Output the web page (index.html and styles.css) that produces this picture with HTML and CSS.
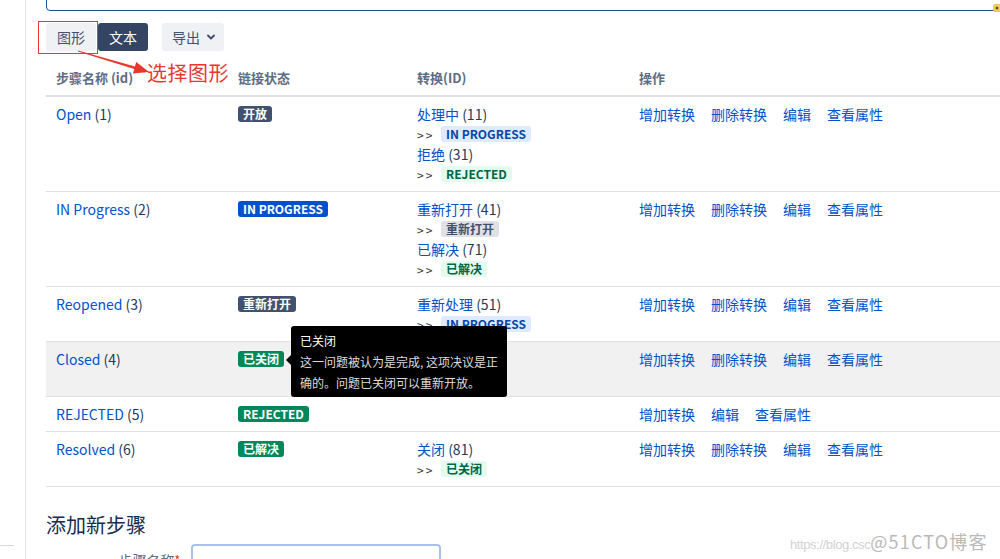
FILE: index.html
```html
<!DOCTYPE html>
<html lang="zh-CN">
<head>
    <meta charset="UTF-8">
    <meta name="viewport" content="width=device-width, initial-scale=1.0">
    <title>工作流 - 步骤</title>
    <link rel="stylesheet" href="styles.css">
</head>
<body>
<div class="page">
    <aside class="sidebar">
        <div class="side-foot"></div>
    </aside>

    <main class="main">
        <div class="editor"><span class="grammar-dot"></span></div>

        <div class="toolbar">
            <div class="btn-group">
                <button class="btn">图形</button>
                <button class="btn btn-selected">文本</button>
            </div>
            <button class="btn btn-drop">导出
                <svg width="12" height="12" viewBox="0 0 12 12"><path d="M3 4.5 L6 7.5 L9 4.5" fill="none" stroke="#42526e" stroke-width="2" stroke-linecap="round" stroke-linejoin="round"/></svg>
            </button>

            <!-- 截图标注 -->
            <div class="mark-box"></div>
            <svg class="mark-arrow" width="200" height="100" viewBox="0 0 200 100">
                <polygon points="78.1,49.6 134.9,65.6 136.3,61 149,71 132.9,72.5 134.3,67.9 77.9,50.4" fill="#e8372f"/>
            </svg>
            <span class="mark-label">选择图形</span>
        </div>

        <div class="steps">
            <div class="row head">
                <div class="cell">步骤名称 (id)</div>
                <div class="cell">链接状态</div>
                <div class="cell">转换(ID)</div>
                <div class="cell">操作</div>
            </div>

            <div class="row">
                <div class="cell"><a href="#">Open</a> <span class="count">(1)</span></div>
                <div class="cell"><span class="loz loz-dark">开放</span></div>
                <div class="cell">
                    <div class="line"><a href="#">处理中</a> <span class="count">(11)</span></div>
                    <div class="line"><span class="to">&gt;&gt;</span><span class="loz loz-sub-blue">IN PROGRESS</span></div>
                    <div class="line"><a href="#">拒绝</a> <span class="count">(31)</span></div>
                    <div class="line"><span class="to">&gt;&gt;</span><span class="loz loz-sub-green">REJECTED</span></div>
                </div>
                <div class="cell ops"><a href="#">增加转换</a><a href="#">删除转换</a><a href="#">编辑</a><a href="#">查看属性</a></div>
            </div>

            <div class="row">
                <div class="cell"><a href="#">IN Progress</a> <span class="count">(2)</span></div>
                <div class="cell"><span class="loz loz-blue">IN PROGRESS</span></div>
                <div class="cell">
                    <div class="line"><a href="#">重新打开</a> <span class="count">(41)</span></div>
                    <div class="line"><span class="to">&gt;&gt;</span><span class="loz loz-sub-gray">重新打开</span></div>
                    <div class="line"><a href="#">已解决</a> <span class="count">(71)</span></div>
                    <div class="line"><span class="to">&gt;&gt;</span><span class="loz loz-sub-green">已解决</span></div>
                </div>
                <div class="cell ops"><a href="#">增加转换</a><a href="#">删除转换</a><a href="#">编辑</a><a href="#">查看属性</a></div>
            </div>

            <div class="row">
                <div class="cell"><a href="#">Reopened</a> <span class="count">(3)</span></div>
                <div class="cell"><span class="loz loz-dark">重新打开</span></div>
                <div class="cell">
                    <div class="line"><a href="#">重新处理</a> <span class="count">(51)</span></div>
                    <div class="line"><span class="to">&gt;&gt;</span><span class="loz loz-sub-blue">IN PROGRESS</span></div>
                </div>
                <div class="cell ops"><a href="#">增加转换</a><a href="#">删除转换</a><a href="#">编辑</a><a href="#">查看属性</a></div>
            </div>

            <div class="row hover">
                <div class="cell"><a href="#">Closed</a> <span class="count">(4)</span></div>
                <div class="cell status">
                    <span class="loz loz-green">已关闭</span>
                    <div class="tip">
                        <div class="tip-title">已关闭</div>
                        <div class="tip-text">这一问题被认为是完成, 这项决议是正<br>确的。问题已关闭可以重新开放。</div>
                    </div>
                </div>
                <div class="cell">
                    <div class="line"><a href="#">重新打开</a> <span class="count">(91)</span></div>
                    <div class="line"><span class="to">&gt;&gt;</span><span class="loz loz-sub-gray">重新打开</span></div>
                </div>
                <div class="cell ops"><a href="#">增加转换</a><a href="#">删除转换</a><a href="#">编辑</a><a href="#">查看属性</a></div>
            </div>

            <div class="row">
                <div class="cell"><a href="#">REJECTED</a> <span class="count">(5)</span></div>
                <div class="cell"><span class="loz loz-green">REJECTED</span></div>
                <div class="cell"></div>
                <div class="cell ops"><a href="#">增加转换</a><a href="#">编辑</a><a href="#">查看属性</a></div>
            </div>

            <div class="row">
                <div class="cell"><a href="#">Resolved</a> <span class="count">(6)</span></div>
                <div class="cell"><span class="loz loz-green">已解决</span></div>
                <div class="cell">
                    <div class="line"><a href="#">关闭</a> <span class="count">(81)</span></div>
                    <div class="line"><span class="to">&gt;&gt;</span><span class="loz loz-sub-green">已关闭</span></div>
                </div>
                <div class="cell ops"><a href="#">增加转换</a><a href="#">删除转换</a><a href="#">编辑</a><a href="#">查看属性</a></div>
            </div>
        </div>

        <h2 class="add-title">添加新步骤</h2>
        <div class="field">
            <label class="field-label">步骤名称<span class="req">*</span></label>
            <input class="field-input" type="text">
        </div>
    </main>

    <div class="watermark"><span class="wm-url">https://blog.csc</span><span class="wm-site">@51CTO博客</span></div>
</div>
</body>
</html>
```

FILE: styles.css
```css
html, body {
    margin: 0;
    padding: 0;
    overflow: hidden;
    background: #fff;
}
body {
    font-family: "Noto Sans CJK SC", "Noto Sans", sans-serif;
    font-size: 14px;
    line-height: 20px;
    color: #172b4d;
}
a {
    color: #0052cc;
    text-decoration: none;
}

.page {
    position: relative;
    display: flex;
    width: 1000px;
    height: 559px;
}

.sidebar {
    width: 25px;
    flex-shrink: 0;
    border-right: 1px solid #e4e4e4;
    display: flex;
    flex-direction: column;
}
.side-foot {
    margin-top: auto;
    margin-bottom: 13px;
    width: 14px;
    border-top: 1px solid #d8d8d8;
}

.main {
    position: relative;
    padding-left: 20px;
    width: 1000px;
    flex-shrink: 0;
}

.editor {
    position: relative;
    height: 29px;
    margin-top: -20px;
    border: 1px solid #1d4f9c;
    border-radius: 4px;
}
.grammar-dot {
    position: absolute;
    left: 946px;
    top: 23px;
    width: 8px;
    height: 8px;
    border-radius: 50%;
    background: #f3d35a;
    box-shadow: inset 0 0 0 2.5px #f3d35a, inset 0 0 0 4px #6b4a3a;
}

.toolbar {
    position: relative;
    display: flex;
    gap: 14px;
    margin-top: 12px;
    height: 28px;
}
.btn-group {
    display: flex;
    gap: 2px;
}
.btn {
    height: 28px;
    padding: 0 11px;
    border: none;
    border-radius: 3px;
    background: #f0f1f4;
    color: #42526e;
    font-family: inherit;
    font-size: 14px;
    line-height: 28px;
}
.btn-selected {
    background: #344563;
    color: #fff;
}
.btn-drop {
    display: flex;
    align-items: center;
    gap: 5px;
    padding: 0 7px 0 10px;
}

.mark-box {
    position: absolute;
    left: -8px;
    top: -2px;
    width: 58px;
    height: 31px;
    border: 1px solid #e53935;
}
.mark-arrow {
    position: absolute;
    left: -46px;
    top: -22px;
    pointer-events: none;
}
.mark-label {
    position: absolute;
    left: 101px;
    top: 37px;
    font-size: 20px;
    line-height: 26px;
    color: #e8372f;
    letter-spacing: 0.5px;
}

.steps {
    margin-top: 10px;
}
.row {
    display: grid;
    grid-template-columns: 182px 179px 222px 1fr;
    border-bottom: 1px solid #dfe1e6;
}
.row.head {
    border-bottom: 2px solid #dfe1e6;
    font-size: 13px;
    font-weight: 600;
    color: #5e6c84;
}
.row.hover {
    background: #f1f1f1;
}
.cell {
    padding: 7px 10px 7px;
}
.row.head .cell {
    padding: 7px 10px 7px;
}
.line {
    height: 20px;
}
.count {
    color: #253858;
}
.ops {
    display: flex;
    gap: 16px;
    align-items: flex-start;
}
.to {
    display: inline-block;
    width: 24px;
    font-size: 12px;
    letter-spacing: 2px;
    color: #333;
}

.loz {
    display: inline-block;
    padding: 0 5px;
    height: 16px;
    line-height: 16px;
    border-radius: 3px;
    font-size: 12px;
    font-weight: 700;
    vertical-align: top;
    margin-top: 2px;
}
.loz-dark { background: #42526e; color: #fff; }
.loz-blue { background: #0052cc; color: #fff; }
.loz-green { background: #00875a; color: #fff; }
.loz-sub-blue { background: #deebff; color: #0747a6; }
.loz-sub-green { background: #e3fcef; color: #006644; }
.loz-sub-gray { background: #dfe1e6; color: #42526e; }

.status {
    position: relative;
}
.tip {
    position: absolute;
    left: 63px;
    top: -16px;
    z-index: 2;
    padding: 5px 9px 4px;
    width: 198px;
    background: #000;
    border-radius: 3px;
    font-size: 12px;
    line-height: 20px;
    white-space: nowrap;
}
.tip::before {
    content: "";
    position: absolute;
    left: -5px;
    top: 29px;
    border-top: 5px solid transparent;
    border-bottom: 5px solid transparent;
    border-right: 5px solid #000;
}
.tip-title {
    color: #fff;
}
.tip-text {
    color: #ddd;
    line-height: 21px;
}

.add-title {
    margin: 26px 0 0;
    font-size: 20px;
    line-height: 24px;
    font-weight: 400;
    color: #172b4d;
}
.field {
    display: flex;
    align-items: center;
    gap: 11px;
    margin-top: 7px;
}
.field-label {
    width: 134px;
    text-align: right;
    color: #5e6c84;
}
.req {
    color: #de350b;
    font-size: 12px;
    vertical-align: top;
}
.field-input {
    width: 246px;
    height: 28px;
    border: 2px solid #a8c0ea;
    border-radius: 4px;
    padding: 0;
}

.watermark {
    position: absolute;
    left: 790px;
    top: 530px;
    white-space: nowrap;
    line-height: 22px;
}
.wm-url {
    font-family: "Liberation Sans", sans-serif;
    font-size: 13px;
    letter-spacing: -0.4px;
    color: #d2d2d2;
}
.wm-site {
    font-size: 18px;
    letter-spacing: 1.2px;
    color: #b9b9b9;
}
```
